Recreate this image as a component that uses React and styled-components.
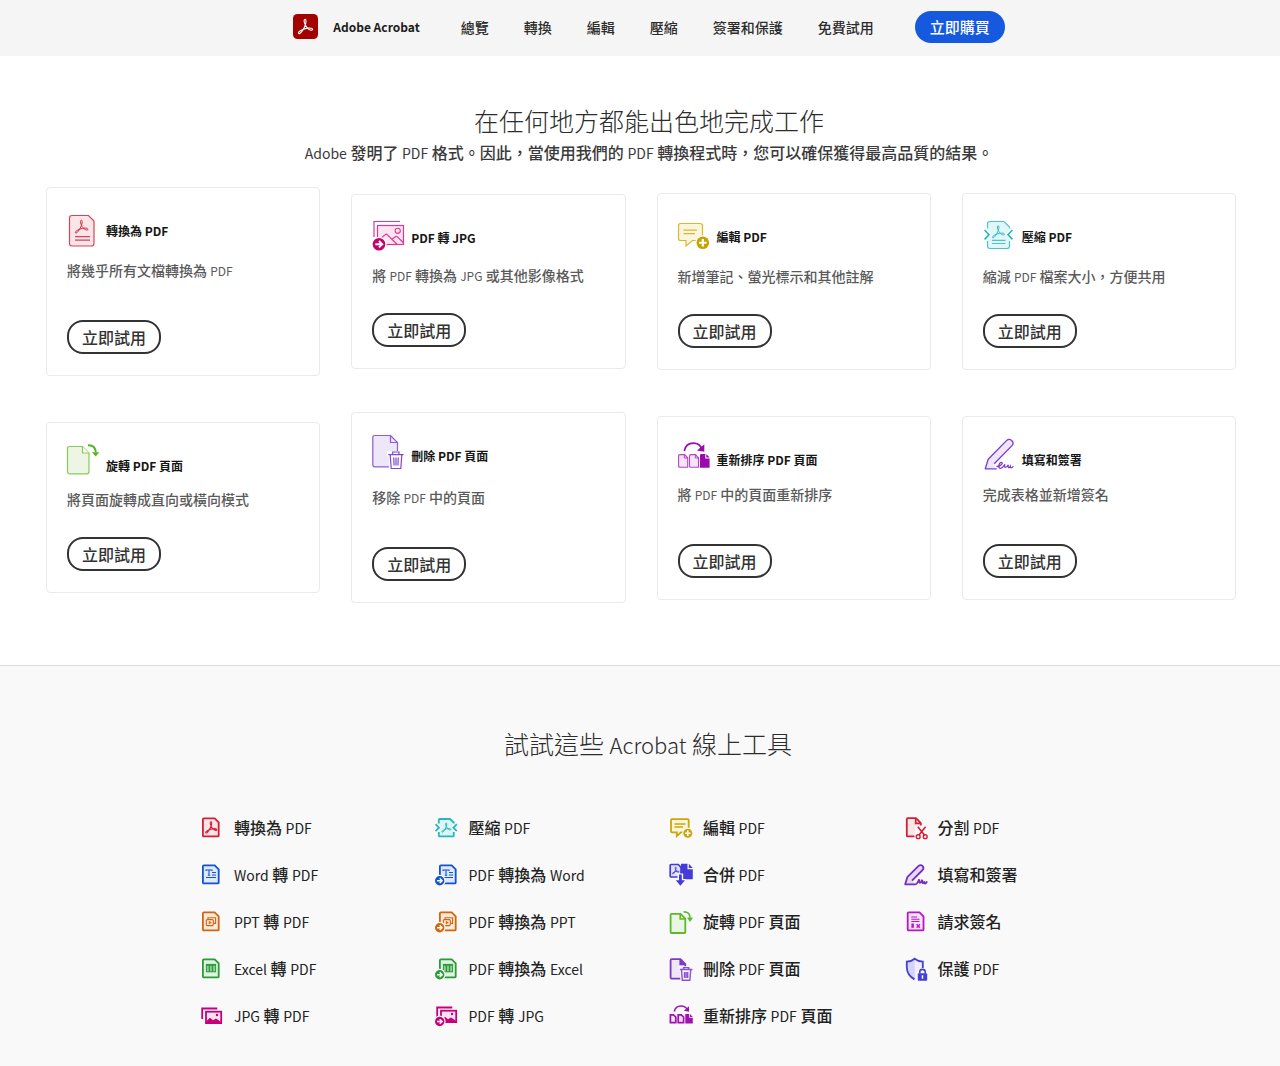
import React from "react";
import styled, { createGlobalStyle } from "styled-components";

const GlobalStyle = createGlobalStyle`
  *, *::before, *::after { box-sizing: border-box; }
  body {
    margin: 0;
    background: #fff;
    color: #2c2c2c;
    font-family: "Noto Sans CJK TC", "Noto Sans", sans-serif;
    font-size: 15px;
  }
  h1, h2, h3, p, ul { margin: 0; padding: 0; }
  ul { list-style: none; }
  a { color: inherit; text-decoration: none; }
  svg { display: block; overflow: visible; }
`;

/* ---------- text with Latin runs set lighter than the Han runs ---------- */

const Latin = styled.span`
  font-weight: ${(p) => p.$weight || "inherit"};
  font-size: ${(p) => (p.$size ? `${p.$size}px` : "inherit")};
  line-height: 1;
`;

function Mixed({ children, size, weight }) {
  return children.split(/([A-Za-z]+)/).map((run, i) =>
    /[A-Za-z]/.test(run) ? (
      <Latin key={i} $size={size} $weight={weight}>
        {run}
      </Latin>
    ) : (
      run
    )
  );
}

/* ---------- layout ---------- */

const Page = styled.div`
  min-height: 100vh;
  display: flex;
  flex-direction: column;
`;

const Header = styled.header`
  min-height: 56px;
  padding: 0 16px 3px 34px;
  display: flex;
  align-items: center;
  justify-content: center;
  gap: 41px;
  background: #f5f5f5;
`;

const Brand = styled.a`
  display: flex;
  align-items: center;
  gap: 15px;
  font-size: 12px;
  font-weight: 700;
  color: #1c1c1c;
  white-space: nowrap;
`;

const Nav = styled.nav`
  display: flex;
  gap: 35px;
`;

const NavLink = styled.a`
  font-size: 14px;
  line-height: 20px;
  font-weight: 500;
  white-space: nowrap;
`;

const BuyButton = styled.button`
  height: 32px;
  padding: 0 15px;
  border: 0;
  border-radius: 16px;
  background: #1459de;
  color: #fff;
  font: 500 15px/20px "Noto Sans CJK TC", sans-serif;
  white-space: nowrap;
  cursor: pointer;
`;

const Features = styled.section`
  padding: 46px 44px 62px 46px;
`;

const Intro = styled.div`
  padding-left: 16px;
  text-align: center;
`;

const Heading = styled.h2`
  font-size: 25px;
  line-height: 36px;
  font-weight: 300;
`;

const Lead = styled.p`
  margin-top: 2px;
  font-size: 16px;
  line-height: 24px;
  font-weight: 500;
  color: #3a3a3a;
`;

const CardGrid = styled.div`
  margin-top: 23px;
  display: grid;
  grid-template-columns: repeat(4, 1fr);
  gap: 36px 31px;
  align-items: center;
`;

const Card = styled.article`
  padding: 21px 20px;
  border: 1px solid #eaeaea;
  border-radius: 4px;
  background: #fff;
`;

const CardHead = styled.div`
  display: flex;
  align-items: center;
  gap: 7px;
  height: 44px;
`;

const CardTitle = styled.h3`
  font-size: 12px;
  line-height: 18px;
  font-weight: 700;
  color: #161616;
`;

const CardText = styled.p`
  margin-top: ${(p) => p.$gap}px;
  font-size: 14px;
  line-height: 20px;
  font-weight: 500;
  color: #5a5a5a;
`;

const TryButton = styled.button`
  display: block;
  margin-top: ${(p) => (p.$roomy ? 40 : 28)}px;
  height: 34px;
  padding: 0 13px;
  border: 2px solid #333;
  border-radius: 16px;
  background: #fff;
  color: #333;
  font: 500 16px/20px "Noto Sans CJK TC", sans-serif;
  white-space: nowrap;
  cursor: pointer;
`;

const Tools = styled.section`
  flex: 1;
  padding: 59px 16px 38px;
  border-top: 1px solid #dcdcdc;
  background: #f9f9f9;
`;

const ToolsFrame = styled.div`
  padding-left: 58px;
`;

const ToolGrid = styled.ul`
  max-width: 938px;
  margin: 54px auto 0;
  display: grid;
  grid-auto-flow: column;
  grid-template-rows: repeat(5, 24px);
  grid-template-columns: repeat(4, 1fr);
  row-gap: 23px;
`;

const ToolLink = styled.a`
  display: flex;
  align-items: center;
  gap: 10px;
  font-size: 16px;
  line-height: 24px;
  font-weight: 500;
  color: #222;
  white-space: nowrap;
`;

/* ---------- icons ---------- */

const TREFOIL =
  "M10.8 3.5C12.8 1.5 13.6 5 12.3 9C11 13 8 18.5 5.5 20.5C3.5 22 2.3 20 4.4 18.3C7.5 15.8 12 14.3 17 14C20.6 13.8 22.2 15.5 20.6 16.5C18.5 17.7 14.5 14.5 12.3 10.5C10.8 7.5 10 5 10.8 3.5Z";

const Trefoil = ({ x, y, s, c, w = 1.4 }) => (
  <path
    d={TREFOIL}
    transform={`translate(${x} ${y}) scale(${s / 24})`}
    fill="none"
    stroke={c}
    strokeWidth={(w * 24) / s}
    strokeLinejoin="round"
  />
);

const Logo = () => (
  <svg width="25" height="25" viewBox="0 0 25 25" aria-hidden="true">
    <rect width="25" height="25" rx="4.5" fill="#a30000" />
    <Trefoil x={2.8} y={3} s={19} c="#fff" w={1.1} />
  </svg>
);

const Big = ({ children }) => (
  <svg width="32" height="44" viewBox="0 0 32 44" fill="none" aria-hidden="true">
    {children}
  </svg>
);

const Small = ({ children }) => (
  <svg width="24" height="24" viewBox="0 0 24 24" fill="none" aria-hidden="true">
    {children}
  </svg>
);

const ArrowBadge = ({ x, y, r, c, bg }) => (
  <g>
    <circle cx={x} cy={y} r={r + 1.2} fill={bg} />
    <circle cx={x} cy={y} r={r} fill={c} />
    <path
      d={`M${x - r * 0.58} ${y}H${x + r * 0.4}M${x} ${y - r * 0.5}L${x + r * 0.52} ${y}L${x} ${y + r * 0.5}`}
      stroke="#fff"
      strokeWidth={r * 0.3}
    />
  </g>
);

const PlusBadge = ({ x, y, r, c, bg }) => (
  <g>
    <circle cx={x} cy={y} r={r + 1.2} fill={bg} />
    <circle cx={x} cy={y} r={r} fill={c} />
    <path d={`M${x - r * 0.6} ${y}H${x + r * 0.6}M${x} ${y - r * 0.6}V${y + r * 0.6}`} stroke="#fff" strokeWidth={r * 0.34} />
  </g>
);

const cardIcons = {
  convert: (
    <Big>
      <path d="M5 6.5H21.5L27 12V34.5Q27 37 24.5 37H5Q2.5 37 2.5 34.5V9Q2.5 6.5 5 6.5Z" fill="#fae5e8" stroke="#d4455a" strokeWidth="1.2" />
      <Trefoil x={6} y={9.2} s={17} c="#d02b44" w={1} />
      <path d="M8 27.7H23M8 31.2H23" stroke="#d4455a" strokeWidth="1.2" />
    </Big>
  ),
  jpg: (
    <Big>
      <path d="M2 21V5.5H28" stroke="#d63b93" strokeWidth="1.2" />
      <rect x="5.5" y="9.5" width="26" height="19" fill="#fbe5f1" stroke="#d63b93" strokeWidth="1.2" />
      <circle cx="25.7" cy="14.8" r="2.6" stroke="#d63b93" strokeWidth="1.1" />
      <path d="M8 23L13.6 18.4Q14.4 17.8 15.2 18.6L25 28.3M19.8 23.2L23.8 20.6Q24.6 20 25.4 20.8L31.5 26.8" stroke="#d63b93" strokeWidth="1.2" />
      <ArrowBadge x={7} y={28.2} r={6.3} c="#c6006f" bg="#fff" />
    </Big>
  ),
  edit: (
    <Big>
      <path d="M2.5 8.5H22Q24.5 8.5 24.5 11V25.5H14.5L8 31V25.5H2.5Q.5 25.5 .5 23.5V11Q.5 8.5 2.5 8.5Z" fill="#faf5df" stroke="#d8b92c" strokeWidth="1.2" />
      <path d="M5.5 15.2H19M5.5 18.7H17" stroke="#d8b92c" strokeWidth="1.2" />
      <PlusBadge x={24.8} y={27.7} r={6.3} c="#c6a300" bg="#fff" />
    </Big>
  ),
  compress: (
    <Big>
      <path d="M4.5 14V9Q4.5 6.5 7 6.5H21L26.5 12V14L23.5 19.7L26.5 25.5V31Q26.5 33.5 24 33.5H7Q4.5 33.5 4.5 31V25.5L7.8 19.7Z" fill="#e0f6f8" />
      <path d="M4.5 13.5V9Q4.5 6.5 7 6.5H21L26.5 12V13.5M26.5 26V31Q26.5 33.5 24 33.5H7Q4.5 33.5 4.5 31V26" stroke="#4cc4cd" strokeWidth="1.2" />
      <path d="M1.6 15L6 19.7L1.6 24.4M29.4 15L25 19.7L29.4 24.4" stroke="#25b3bf" strokeWidth="1.6" />
      <Trefoil x={7.3} y={8.8} s={16} c="#35bcc6" w={1} />
      <path d="M9 25.3H22.5M9 28.5H22.5" stroke="#4cc4cd" strokeWidth="1.2" />
    </Big>
  ),
  rotate: (
    <Big>
      <path d="M2 2.5H15.5L22 9V27.5Q22 29.8 19.8 29.8H2.5Q.5 29.8 .5 27.5V4.5Q.5 2.5 2.5 2.5Z" fill="#edf6e5" stroke="#85cb57" strokeWidth="1.2" />
      <path d="M15.5 2.5V9H22" fill="#fff" stroke="#85cb57" strokeWidth="1.2" />
      <path d="M21 1.2C26 1 28.6 4 28.8 8.5" stroke="#58b528" strokeWidth="2" />
      <path d="M25 8.2H32.3L28.7 12.6Z" fill="#58b528" />
    </Big>
  ),
  remove: (
    <Big>
      <path d="M2.8 1.5H18.5L25.5 8.5V32.8H2.8Q.8 32.8 .8 30.8V3.5Q.8 1.5 2.8 1.5Z" fill="#eee6f9" stroke="#8b5ed3" strokeWidth="1.2" />
      <path d="M18.5 1.5V8.5H25.5" stroke="#8b5ed3" strokeWidth="1.2" />
      <path d="M15 17H33V36H17V22.5H15Z" fill="#fff" />
      <path d="M16.3 20.7H31.6M20.7 20.5V18H27V20.5M18.2 20.7L19.2 34.5H28.8L29.8 20.7M21.7 23.5L22.1 31.5M24 23.5V31.5M26.3 23.5L25.9 31.5" stroke="#7d49cc" strokeWidth="1.2" />
    </Big>
  ),
  reorder: (
    <Big>
      <path d="M2 16.6H6.5L9.7 19.8V29.3H2Q.6 29.3 .6 28V18Q.6 16.6 2 16.6ZM13 16.6H17.5L20.5 19.8V29.3H13Q11.5 29.3 11.5 28V18Q11.5 16.6 13 16.6Z" fill="#f8e4fa" stroke="#b344c1" strokeWidth="1.1" />
      <path d="M6.3 16.8V20H9.5M17.3 16.8V20H20.4" stroke="#b344c1" />
      <path d="M23.3 16H27.3V20.5H31.6V29.8H22V17.3Q22 16 23.3 16ZM28.3 16L31.6 19.5H28.3Z" fill="#9b0bac" />
      <path d="M6.3 13C7.3 8 11 5.2 15.5 5.2C19.5 5.2 22.5 7.5 24 11" stroke="#9b0bac" strokeWidth="1.7" />
      <path d="M26.3 6.3V13.8L19 12.4Z" fill="#9b0bac" />
    </Big>
  ),
  sign: (
    <Big>
      <path d="M2.3 30.8L5.2 21.2L23.5 2.6Q26 .2 28.8 2.4Q31.3 4.6 29.2 7.4L11.8 25.8V30.8Z" fill="#efe6fa" />
      <path d="M13.8 30.8H2.3L5.2 21.2L23.5 2.6Q26 .2 28.6 2.4Q31.3 4.6 29.2 7.4L11.2 25.8" stroke="#7c3cc9" strokeWidth="1.3" strokeLinejoin="round" />
      <path d="M14 28.5C18.5 28 20.5 24.5 18.3 24.3C16 24.3 14.8 29.8 17.2 30.4C19.3 30.8 20.8 27.8 22 26.3C20.8 29.5 22.5 31 25.3 26.8C24.6 30 26 30.5 27.3 28.3C27.4 30.5 29 30 30 28.5" stroke="#7c3cc9" strokeWidth="1.3" strokeLinecap="round" />
    </Big>
  ),
};

const Doc = ({ c, f, x = 2 }) => (
  <path
    d={`M${x + 1.9} 3.3H${x + 12.7}L${x + 16.7} 7.3V20.4Q${x + 16.7} 21.4 ${x + 15.7} 21.4H${x + 1.9}Q${x + 0.9} 21.4 ${x + 0.9} 20.4V4.3Q${x + 0.9} 3.3 ${x + 1.9} 3.3Z`}
    fill={f}
    stroke={c}
    strokeWidth="1.8"
  />
);

const WordMark = ({ c, x = 0 }) => (
  <path
    d={`M${x + 6} 9V8H${x + 12}V9M${x + 9} 8V13.3M${x + 7.8} 13.3H${x + 10.2}M${x + 12} 10.5H${x + 16}M${x + 12} 13H${x + 16}M${x + 6} 15.5H${x + 16}`}
    stroke={c}
    strokeWidth="1.1"
  />
);

const SlidesMark = ({ c, x = 0 }) => (
  <g stroke={c} strokeWidth="1.1">
    <rect x={x + 6.3} y="10.6" width="7" height="6" rx="1" />
    <path d={`M${x + 8} 10.4V8.8H${x + 15.6}V14.4H${x + 13.5}`} />
    <path d={`M${x + 9} 12.2L${x + 11.4} 13.6L${x + 9} 15Z`} fill={c} strokeWidth=".5" />
  </g>
);

const SheetMark = ({ c, x = 0 }) => (
  <g stroke={c}>
    <rect x={x + 6.4} y="8.4" width="9.2" height="7.4" fill="#8fce96" strokeWidth="1" />
    <path d={`M${x + 6.4} 9H${x + 15.6}M${x + 9.4} 8.4V15.8M${x + 12.5} 8.4V15.8`} strokeWidth="1.3" />
  </g>
);

const PhotoPair = ({ c, x = 0, y = 0 }) => (
  <g transform={`translate(${x} ${y})`}>
    <path d="M2.2 16V5.5H17.3" stroke={c} strokeWidth="1.8" />
    <rect x="6" y="8.7" width="15.2" height="11.4" fill="#fbe1f0" stroke={c} strokeWidth="1.8" />
    <path d="M7 17.5L10 14.8L13 17.2L16 15.6L20.5 18.5V20H7Z" fill={c} />
    <circle cx="17" cy="12" r="1.2" fill={c} />
  </g>
);

const BG = "#f9f9f9";
const RED = "#d31f36";
const BLUE = "#1254d0";
const ORANGE = "#d2660f";
const GREEN = "#2c9b37";
const PINK = "#c6007a";

const toolIcons = {
  convert: (
    <Small>
      <Doc c={RED} f="#fbe3e6" />
      <Trefoil x={3.6} y={4.9} s={15} c={RED} w={1.1} />
    </Small>
  ),
  word: (
    <Small>
      <Doc c={BLUE} f="#dfe9fb" />
      <WordMark c={BLUE} />
    </Small>
  ),
  ppt: (
    <Small>
      <Doc c={ORANGE} f="#fbeadb" />
      <SlidesMark c={ORANGE} />
    </Small>
  ),
  excel: (
    <Small>
      <Doc c={GREEN} f="#e0f3e2" />
      <SheetMark c={GREEN} />
    </Small>
  ),
  jpg: (
    <Small>
      <PhotoPair c={PINK} />
    </Small>
  ),
  compress: (
    <Small>
      <path d="M4 9V4.2H15.5L18.8 7.5V9L16 12.7L18.8 16.5V21.2H4V16.5L6.8 12.7Z" fill="#dbf5f7" />
      <path d="M3.8 8.5V5Q3.8 4 4.8 4H15L18.8 7.5V8.5M18.8 17V20.4Q18.8 21.4 17.8 21.4H4.8Q3.8 21.4 3.8 20.4V17" stroke="#28b6bd" strokeWidth="1.8" />
      <path d="M.6 9.2L4 12.7L.6 16.2M21.8 9.2L18.4 12.7L21.8 16.2" stroke="#28b6bd" strokeWidth="1.8" />
      <Trefoil x={5.3} y={6.6} s={12} c="#28b6bd" w={1} />
    </Small>
  ),
  toWord: (
    <Small>
      <Doc c={BLUE} f="#dfe9fb" x={4} />
      <WordMark c={BLUE} x={2} />
      <ArrowBadge x={4.7} y={18.7} r={4.7} c={BLUE} bg={BG} />
    </Small>
  ),
  toPpt: (
    <Small>
      <Doc c={ORANGE} f="#fbeadb" x={4} />
      <SlidesMark c={ORANGE} x={2} />
      <ArrowBadge x={4.7} y={18.7} r={4.7} c={ORANGE} bg={BG} />
    </Small>
  ),
  toExcel: (
    <Small>
      <Doc c={GREEN} f="#e0f3e2" x={4} />
      <SheetMark c={GREEN} x={2} />
      <ArrowBadge x={4.7} y={18.7} r={4.7} c={GREEN} bg={BG} />
    </Small>
  ),
  toJpg: (
    <Small>
      <PhotoPair c={PINK} y={-1} />
      <ArrowBadge x={4.7} y={18.5} r={4.7} c={PINK} bg={BG} />
    </Small>
  ),
  edit: (
    <Small>
      <path d="M3 4.2H18.7Q19.7 4.2 19.7 5.2V17.3H12L7.8 21V17.3H3Q2 17.3 2 16.3V5.2Q2 4.2 3 4.2Z" fill="#faf4d8" stroke="#c9a70c" strokeWidth="1.8" />
      <path d="M5.5 9H16.5M5.5 12H14" stroke="#c9a70c" strokeWidth="1.3" />
      <PlusBadge x={18.8} y={18.3} r={4.5} c="#c9a70c" bg={BG} />
    </Small>
  ),
  combine: (
    <Small>
      <path d="M2.2 2.5H9.3L12 5.3V15H2.2Q1.2 15 1.2 14V3.5Q1.2 2.5 2.2 2.5Z" fill="#e2e0fb" stroke="#453bd8" strokeWidth="1.7" />
      <Trefoil x={2.2} y={4} s={9} c="#453bd8" w={0.9} />
      <path d="M12 1.7H18.5V7.2H23.8V17.2H12ZM19.8 1.7L23.8 5.9H19.8Z" fill="#453bd8" />
      <path d="M8.6 11.5H14.2V17H17.4L11.4 24.6L5.4 17H8.6Z" fill={BG} />
      <path d="M10 12.5H12.8V18.3H16L11.4 23.7L6.8 18.3H10Z" fill="#453bd8" />
    </Small>
  ),
  rotate: (
    <Small>
      <path d="M2.6 4.8H11.5L16.3 9.6V23.2Q16.3 24 15.3 24H2.6Q1.6 24 1.6 23.2V5.8Q1.6 4.8 2.6 4.8Z" fill="#eaf6e1" stroke="#5db82b" strokeWidth="1.8" />
      <path d="M11.2 5V10H16" stroke="#5db82b" strokeWidth="1.6" />
      <path d="M14.6 2.8C19 2.6 20.9 5 21 8.5" stroke="#5db82b" strokeWidth="1.7" />
      <path d="M18 8.4H24L21 13Z" fill="#5db82b" />
    </Small>
  ),
  remove: (
    <Small>
      <path d="M2.6 3.2H11.5L16.3 8V22.6H2.6Q1.6 22.6 1.6 21.6V4.2Q1.6 3.2 2.6 3.2Z" fill="#efe6fa" stroke="#7a3cc6" strokeWidth="1.8" />
      <path d="M11.2 3.5V8.4H16" fill="#7a3cc6" stroke="#7a3cc6" strokeWidth="1.6" />
      <path d="M9.6 10.2H25V26H11.3V15.5H9.6Z" fill={BG} />
      <path d="M10.8 13.5H23.4M14.5 13V11.6H19.7V13M12.5 13.8L13.3 24.2H20.9L21.7 13.8M15.5 16V22M17.1 16V22M18.7 16V22" stroke="#8a52d0" strokeWidth="1.4" />
    </Small>
  ),
  reorder: (
    <Small>
      <path d="M1.4 11.8H4.5L6.8 14V19.6H1.4ZM9.2 11.8H12.3L14.6 14V19.6H9.2Z" fill="#f7dffa" stroke="#a011b1" strokeWidth="1.7" />
      <path d="M16.3 11H20.2V14.7H23.8V20.5H16.3ZM21 11L23.8 13.9H21Z" fill="#a011b1" />
      <path d="M5.3 8.5C6 5 8.6 2.9 12 2.9C15 2.9 17 4.2 18.5 6.5" stroke="#a011b1" strokeWidth="1.5" />
      <path d="M20 3.3V8.7L14.8 7.8Z" fill="#a011b1" />
    </Small>
  ),
  split: (
    <Small>
      <path d="M3.8 3.2H12L16.8 8V21.4H3.8Q2.8 21.4 2.8 20.4V4.2Q2.8 3.2 3.8 3.2Z" fill="#fbe5e7" stroke={RED} strokeWidth="1.8" />
      <path d="M11.7 3.5V8.4H16.5" stroke={RED} strokeWidth="1.6" />
      <path d="M12 10.5H25V25H10.5V19Z" fill={BG} />
      <path d="M13.8 11.8L20.6 20.2M21.6 11.8L14.8 20.2" stroke={RED} strokeWidth="1.6" />
      <circle cx="14.2" cy="21.7" r="1.9" stroke={RED} strokeWidth="1.4" />
      <circle cx="21.2" cy="21.7" r="1.9" stroke={RED} strokeWidth="1.4" />
    </Small>
  ),
  sign: (
    <Small>
      <path d="M11 22.3H1.2L3.3 15.2L14.6 3.9Q16.6 2.2 18.6 4Q20.3 6 18.6 8L8 18.6" fill="#e6d9f6" stroke="#7530bd" strokeWidth="1.8" strokeLinejoin="round" />
      <path d="M11.5 22.3C13.5 21.8 14.5 18.5 15.3 17.3C14.7 20.5 15.6 22.8 18.3 17.8C17.8 21 18.8 22.6 20.4 19.4C20.5 22 21.8 22.4 22.8 20" stroke="#7530bd" strokeWidth="1.8" strokeLinecap="round" />
    </Small>
  ),
  request: (
    <Small>
      <Doc c="#b218c4" f="#f9e1fb" x={2.8} />
      <path d="M7.3 8H13M7.3 10.3H15.5M7.3 12.5H15.5" stroke="#b218c4" strokeWidth="1.1" />
      <path d="M7.4 14.5H9.9V18.8H7.4Z" fill="#b218c4" />
      <path d="M12.6 15.2L15.9 18.8M15.9 15.2L12.6 18.8" stroke="#b218c4" strokeWidth="1.3" />
    </Small>
  ),
  protect: (
    <Small>
      <path d="M10.7 2.7Q14 5.4 18.8 5.6V13Q16.5 20 10.7 23.4Q2.8 19 2.8 11V5.6Q7.4 5.4 10.7 2.7Z" fill="#efeefc" />
      <path d="M10.7 2.7V23.4Q2.8 19 2.8 11V5.6Q7.4 5.4 10.7 2.7Z" fill="#d5d3f8" />
      <path d="M18.8 12V5.6Q14 5.4 10.7 2.7Q7.4 5.4 2.8 5.6V11Q2.8 19 10.5 23.4" stroke="#453fd4" strokeWidth="1.8" />
      <path d="M12.5 24.8V16L15 12.5H23V24.8Z" fill={BG} />
      <rect x="13.8" y="17.3" width="9.4" height="7.4" rx="1" fill="#453fd4" />
      <path d="M15.8 17.5V15.8Q15.8 13.4 18.5 13.4Q21.2 13.4 21.2 15.8V17.5" stroke="#453fd4" strokeWidth="1.6" />
      <path d="M18.5 19.3V22.6" stroke="#fff" strokeWidth="1.5" />
    </Small>
  ),
};

/* ---------- content ---------- */

const navItems = ["總覽", "轉換", "編輯", "壓縮", "簽署和保護", "免費試用"];

const cards = [
  { icon: "convert", title: "轉換為 PDF", text: "將幾乎所有文檔轉換為 PDF", gap: 7, roomy: true },
  { icon: "jpg", title: "PDF 轉 JPG", text: "將 PDF 轉換為 JPG 或其他影像格式", gap: 5 },
  { icon: "edit", title: "編輯 PDF", text: "新增筆記、螢光標示和其他註解", gap: 7 },
  { icon: "compress", title: "壓縮 PDF", text: "縮減 PDF 檔案大小，方便共用", gap: 7 },
  { icon: "rotate", title: "旋轉 PDF 頁面", text: "將頁面旋轉成直向或橫向模式", gap: 1 },
  { icon: "remove", title: "刪除 PDF 頁面", text: "移除 PDF 中的頁面", gap: 9, roomy: true },
  { icon: "reorder", title: "重新排序 PDF 頁面", text: "將 PDF 中的頁面重新排序", gap: 2, roomy: true },
  { icon: "sign", title: "填寫和簽署", text: "完成表格並新增簽名", gap: 2, roomy: true },
];

const tools = [
  ["convert", "轉換為 PDF"],
  ["word", "Word 轉 PDF"],
  ["ppt", "PPT 轉 PDF"],
  ["excel", "Excel 轉 PDF"],
  ["jpg", "JPG 轉 PDF"],
  ["compress", "壓縮 PDF"],
  ["toWord", "PDF 轉換為 Word"],
  ["toPpt", "PDF 轉換為 PPT"],
  ["toExcel", "PDF 轉換為 Excel"],
  ["toJpg", "PDF 轉 JPG"],
  ["edit", "編輯 PDF"],
  ["combine", "合併 PDF"],
  ["rotate", "旋轉 PDF 頁面"],
  ["remove", "刪除 PDF 頁面"],
  ["reorder", "重新排序 PDF 頁面"],
  ["split", "分割 PDF"],
  ["sign", "填寫和簽署"],
  ["request", "請求簽名"],
  ["protect", "保護 PDF"],
];

export default function App() {
  return (
    <Page lang="zh-Hant">
      <GlobalStyle />
      <Header>
        <Brand href="#">
          <Logo />
          Adobe Acrobat
        </Brand>
        <Nav>
          {navItems.map((item) => (
            <NavLink key={item} href="#">
              {item}
            </NavLink>
          ))}
        </Nav>
        <BuyButton type="button">立即購買</BuyButton>
      </Header>

      <Features>
        <Intro>
          <Heading>在任何地方都能出色地完成工作</Heading>
          <Lead>
            <Mixed size={14} weight={400}>
              Adobe 發明了 PDF 格式。因此，當使用我們的 PDF 轉換程式時，您可以確保獲得最高品質的結果。
            </Mixed>
          </Lead>
        </Intro>
        <CardGrid>
          {cards.map((card) => (
            <Card key={card.icon}>
              <CardHead>
                {cardIcons[card.icon]}
                <CardTitle>{card.title}</CardTitle>
              </CardHead>
              <CardText $gap={card.gap}>
                <Mixed size={12} weight={400}>{card.text}</Mixed>
              </CardText>
              <TryButton type="button" $roomy={card.roomy}>
                立即試用
              </TryButton>
            </Card>
          ))}
        </CardGrid>
      </Features>

      <Tools>
        <Intro>
          <Heading>
            <Mixed size={22}>試試這些 Acrobat 線上工具</Mixed>
          </Heading>
        </Intro>
        <ToolsFrame>
          <ToolGrid>
            {tools.map(([icon, label]) => (
              <li key={icon}>
                <ToolLink href="#">
                  {toolIcons[icon]}
                  <span>
                    <Mixed size={14} weight={400}>{label}</Mixed>
                  </span>
                </ToolLink>
              </li>
            ))}
          </ToolGrid>
        </ToolsFrame>
      </Tools>
    </Page>
  );
}
